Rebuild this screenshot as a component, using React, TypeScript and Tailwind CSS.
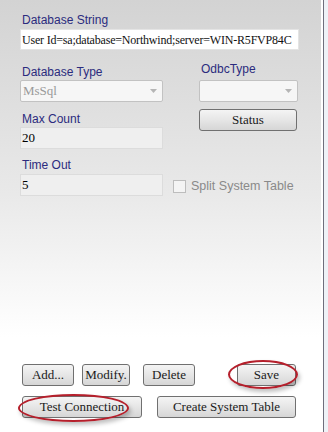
import React from 'react';

const label = "h-[15px] pl-[2px] text-[12px] leading-[15px] text-[#2b2b7e] font-['Liberation_Sans',Arial,sans-serif] whitespace-nowrap";
const serif = "font-['Liberation_Serif','Times_New_Roman',serif] font-normal";

function Btn({ text, w, cls = '' }: { text: string; w: string; cls?: string }) {
  return (
    <div
      className={`${w} h-[22px] shrink-0 flex items-center justify-center rounded-[3px] border border-[#707070] bg-gradient-to-b from-[#f4f4f4] via-[#e6e6e6] to-[#d6d6d6] text-[13px] text-[#1a1a1a] ${serif} ${cls}`}
    >
      {text}
    </div>
  );
}

function Select({ value, w }: { value?: string; w: string }) {
  return (
    <div className={`${w} h-[22px] flex items-center justify-between rounded-[2px] border border-[#c2c2c2] bg-[#f6f6f6] pl-[2px] pr-[5px]`}>
      <span className={`text-[13px] text-[#9a9a9a] ${serif}`}>{value}</span>
      <svg width="7" height="4" viewBox="0 0 7 4">
        <path d="M0 0 L7 0 L3.5 4 Z" fill="#b5b5b5" />
      </svg>
    </div>
  );
}

export default function App() {
  return (
    <div className="w-[328px] h-[432px] flex bg-white">
      <div className="relative w-[321px] h-full flex flex-col pt-[12px] pl-[20px] bg-[linear-gradient(to_bottom,#d3d3d3_0%,#e9e9e9_45%,#ffffff_78%,#ffffff_100%)]">
        <div className={`${label} h-[16px] leading-[16px]`}>Database String</div>
        <div className={`mt-[1px] w-[279px] h-[21px] flex items-center bg-white border border-[#e4e4e4] pl-[1px] overflow-hidden whitespace-nowrap text-[12px] tracking-[-0.2px] text-[#111] ${serif}`}>
          User Id=sa;database=Northwind;server=WIN-R5FVP84C
        </div>

        <div className="mt-[12px] flex">
          <div className="w-[179px] shrink-0 flex flex-col">
            <div className={`${label} mt-[3px]`}>Database Type</div>
            <Select value="MsSql" w="w-[143px]" />
            <div className={`${label} mt-[10px]`}>Max Count</div>
            <div className={`w-[143px] h-[22px] flex items-center border border-[#dcdcdc] bg-[#efefef] pl-[1px] text-[13px] text-black ${serif}`}>20</div>
            <div className={`${label} mt-[9px]`}>Time Out</div>
            <div className="mt-[1px] flex items-center whitespace-nowrap">
              <div className={`w-[143px] h-[22px] shrink-0 flex items-center border border-[#dcdcdc] bg-[#efefef] pl-[1px] text-[13px] text-black ${serif}`}>5</div>
              <div className="ml-[10px] mt-[3px] w-[13px] h-[13px] shrink-0 border border-[#bdbdbd] bg-[#f4f4f4]" />
              <span className="ml-[5px] mt-[3px] text-[12.5px] text-[#8a8a8a] font-['Liberation_Sans',Arial,sans-serif]">Split System Table</span>
            </div>
          </div>
          <div className="w-[99px] flex flex-col">
            <div className={`${label} pl-[1px]`}>OdbcType</div>
            <div className="mt-[3px]">
              <Select w="w-[99px]" />
            </div>
            <Btn text="Status" w="w-[98px] mt-[7px] h-[21px]" />
          </div>
        </div>

        <div className="mt-auto pb-[14px] pl-[2px] flex flex-col">
          <div className="flex items-center">
            <Btn text="Add..." w="w-[52px]" />
            <Btn text="Modify." w="w-[48px]" cls="ml-[8px] -mt-[1px]" />
            <Btn text="Delete" w="w-[52px]" cls="ml-[13px]" />
            <Btn text="Save" w="w-[59px]" cls="ml-[42px] border-[#3aa0c8]" />
          </div>
          <div className="mt-[10px] flex">
            <Btn text="Test Connection" w="w-[120px]" />
            <Btn text="Create System Table" w="w-[139px]" cls="ml-[15px]" />
          </div>
        </div>

        <div className="absolute left-[228px] top-[360px] w-[70px] h-[29px] rounded-[50%] border-2 border-[#b51f2b] shadow-[2px_3px_4px_rgba(0,0,0,0.25)]" />
        <div className="absolute left-[18px] top-[394px] w-[111px] h-[28px] rounded-[50%] border-2 border-[#b51f2b] shadow-[2px_3px_4px_rgba(0,0,0,0.25)]" />
      </div>
      <div className="w-[2px] h-full bg-white" />
      <div className="w-[1px] h-full bg-[#6e6e7c]" />
      <div className="w-[4px] h-full bg-[#eef2f7]" />
    </div>
  );
}
